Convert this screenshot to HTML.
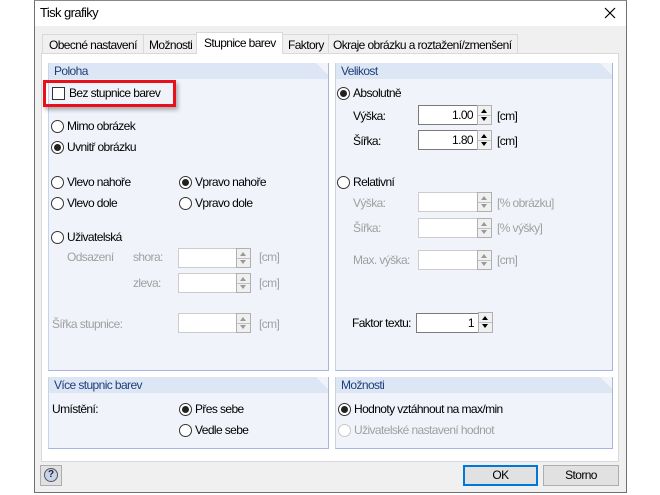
<!DOCTYPE html>
<html><head><meta charset="utf-8"><style>
*{box-sizing:border-box;margin:0;padding:0}
body{width:660px;height:495px;background:#fff;position:relative;overflow:hidden;font-family:"Liberation Sans",sans-serif;font-size:12px;letter-spacing:-0.6px;color:#000}
.a{position:absolute;white-space:nowrap}
.dis{color:#a0a0a0}
.grp{position:absolute;background:#f0f4fa;border-right:1px solid #a9b4e0;border-bottom:1px solid #a9b4e0;border-left:1px solid #c8d2ea}
.grp .h{position:absolute;left:0;top:0;right:0;height:16px;background:#dde6f4;color:#1e3f7a;padding:2px 5px;font-size:12px;line-height:12px;clip-path:polygon(0 0,calc(100% - 12px) 0,100% 12px,100% 100%,0 100%)}
.rad{position:absolute;width:13px;height:13px;border:1px solid #333;border-radius:50%;background:#fff}
.rad.on::after{content:"";position:absolute;left:2px;top:2px;width:7px;height:7px;border-radius:50%;background:#222}
.rad.d{border-color:#c8c8c8}
.inp{position:absolute;height:20px;background:#fff;border:1px solid #7a7a7a;text-align:right;padding:2px 4px;font-size:12px;line-height:14px}
.inp.d{border-color:#ccc}
.sp{position:absolute;width:15px;height:20px;border:1px solid #b0b0b0;background:#f0f0f0}
.sp::before{content:"";position:absolute;left:3px;top:3px;border-left:3.5px solid transparent;border-right:3.5px solid transparent;border-bottom:4px solid #000}
.sp::after{content:"";position:absolute;left:3px;top:11px;border-left:3.5px solid transparent;border-right:3.5px solid transparent;border-top:4px solid #000}
.sp.d::before{border-bottom-color:#999}.sp.d::after{border-top-color:#999}
.sp i{position:absolute;left:0;right:0;top:9px;border-top:1px solid #c0c0c0}
.btn{position:absolute;height:21px;background:#e1e1e1;border:1px solid #adadad;text-align:center;line-height:19px}
.tab{overflow:hidden}
</style></head><body>
<div class="a" style="left:34px;top:0;width:593px;height:493px;background:#f0f0f0;border:1px solid #707070;border-top:1px solid #888"></div>
<div class="a" style="left:35px;top:1px;width:591px;height:25px;background:#fff"></div>
<div class="a" style="left:40px;top:5px;font-size:13px">Tisk grafiky</div>
<svg class="a" style="left:604px;top:7px" width="12" height="12"><path d="M1 1L11 11M11 1L1 11" stroke="#000" stroke-width="1.2"/></svg>
<div class="a" style="left:41px;top:53px;width:578px;height:409px;background:#fff;border:1px solid #d9d9d9"></div>
<div class="a tab" style="left:42px;top:34px;width:102px;height:20px;border:1px solid #d9d9d9;background:#f0f0f0;padding:3px 6px">Obecné nastavení</div>
<div class="a tab" style="left:143px;top:34px;width:54px;height:20px;border:1px solid #d9d9d9;background:#f0f0f0;padding:3px 5px">Možnosti</div>
<div class="a tab" style="left:196px;top:32px;width:87px;height:22px;border:1px solid #d9d9d9;border-bottom:none;background:#fff;padding:3px 7px">Stupnice barev</div>
<div class="a tab" style="left:282px;top:34px;width:47px;height:20px;border:1px solid #d9d9d9;background:#f0f0f0;padding:3px 5px">Faktory</div>
<div class="a tab" style="left:328px;top:34px;width:190px;height:20px;border:1px solid #d9d9d9;background:#f0f0f0;padding:3px 4px">Okraje obrázku a roztažení/zmenšení</div>
<div class="grp" style="left:48px;top:63px;width:281px;height:308px"><div class="h">Poloha</div></div>
<div class="a" style="left:43px;top:80px;width:133px;height:27px;border:3px solid #e8101a;box-shadow:2px 3px 4px rgba(0,0,0,.3)"></div>
<div class="a" style="left:52px;top:87px;width:13px;height:13px;border:1px solid #333;background:#fff"></div>
<div class="a" style="left:69px;top:86px">Bez stupnice barev</div>
<div class="rad" style="left:51px;top:120px"></div><div class="a" style="left:67px;top:119px">Mimo obrázek</div>
<div class="rad on" style="left:51px;top:141px"></div><div class="a" style="left:67px;top:140px">Uvnitř obrázku</div>
<div class="rad" style="left:51px;top:176px"></div><div class="a" style="left:67px;top:175px">Vlevo nahoře</div>
<div class="rad" style="left:51px;top:197px"></div><div class="a" style="left:67px;top:196px">Vlevo dole</div>
<div class="rad on" style="left:179px;top:176px"></div><div class="a" style="left:195px;top:175px">Vpravo nahoře</div>
<div class="rad" style="left:179px;top:197px"></div><div class="a" style="left:195px;top:196px">Vpravo dole</div>
<div class="rad" style="left:51px;top:231px"></div><div class="a" style="left:67px;top:230px">Uživatelská</div>
<div class="a dis" style="left:67px;top:250px">Odsazení</div><div class="a dis" style="left:133px;top:250px">shora:</div>
<div class="inp d" style="left:178px;top:248px;width:59px"></div><div class="sp d" style="left:236px;top:248px"><i></i></div><div class="a dis" style="left:259px;top:250px">[cm]</div>
<div class="a dis" style="left:133px;top:276px">zleva:</div>
<div class="inp d" style="left:178px;top:273px;width:59px"></div><div class="sp d" style="left:236px;top:273px"><i></i></div><div class="a dis" style="left:259px;top:276px">[cm]</div>
<div class="a dis" style="left:52px;top:317px">Šířka stupnice:</div>
<div class="inp d" style="left:178px;top:313px;width:59px"></div><div class="sp d" style="left:236px;top:313px"><i></i></div><div class="a dis" style="left:259px;top:317px">[cm]</div>
<div class="grp" style="left:335px;top:63px;width:278px;height:308px"><div class="h">Velikost</div></div>
<div class="rad on" style="left:337px;top:87px"></div><div class="a" style="left:353px;top:86px">Absolutně</div>
<div class="a" style="left:353px;top:109px">Výška:</div>
<div class="inp" style="left:418px;top:105px;width:60px">1.00</div><div class="sp" style="left:477px;top:105px"><i></i></div><div class="a" style="left:497px;top:109px">[cm]</div>
<div class="a" style="left:353px;top:134px">Šířka:</div>
<div class="inp" style="left:418px;top:130px;width:60px">1.80</div><div class="sp" style="left:477px;top:130px"><i></i></div><div class="a" style="left:497px;top:134px">[cm]</div>
<div class="rad" style="left:337px;top:176px"></div><div class="a" style="left:353px;top:175px">Relativní</div>
<div class="a dis" style="left:353px;top:196px">Výška:</div>
<div class="inp d" style="left:418px;top:192px;width:60px"></div><div class="sp d" style="left:477px;top:192px"><i></i></div><div class="a dis" style="left:497px;top:196px">[% obrázku]</div>
<div class="a dis" style="left:353px;top:221px">Šířka:</div>
<div class="inp d" style="left:418px;top:218px;width:60px"></div><div class="sp d" style="left:477px;top:218px"><i></i></div><div class="a dis" style="left:497px;top:221px">[% výšky]</div>
<div class="a dis" style="left:353px;top:253px">Max. výška:</div>
<div class="inp d" style="left:418px;top:250px;width:60px"></div><div class="sp d" style="left:477px;top:250px"><i></i></div><div class="a dis" style="left:497px;top:253px">[cm]</div>
<div class="a" style="left:352px;top:316px">Faktor textu:</div>
<div class="inp" style="left:416px;top:313px;width:63px">1</div><div class="sp" style="left:478px;top:312px;height:21px"><i></i></div>
<div class="grp" style="left:48px;top:377px;width:281px;height:72px"><div class="h">Více stupnic barev</div></div>
<div class="a" style="left:52px;top:402px">Umístění:</div>
<div class="rad on" style="left:179px;top:403px"></div><div class="a" style="left:195px;top:402px">Přes sebe</div>
<div class="rad" style="left:179px;top:424px"></div><div class="a" style="left:195px;top:423px">Vedle sebe</div>
<div class="grp" style="left:335px;top:377px;width:278px;height:72px"><div class="h">Možnosti</div></div>
<div class="rad on" style="left:338px;top:403px"></div><div class="a" style="left:354px;top:402px">Hodnoty vztáhnout na max/min</div>
<div class="rad d" style="left:338px;top:424px"></div><div class="a dis" style="left:354px;top:423px">Uživatelské nastavení hodnot</div>
<div class="btn" style="left:40px;top:465px;width:22px;height:21px"></div>
<div class="a" style="left:44px;top:468px;width:14px;height:14px;border-radius:50%;background:#c9d4e8;border:1px solid #556;font-size:10px;font-weight:bold;text-align:center;line-height:12px;color:#223;letter-spacing:0">?</div>
<div class="btn" style="left:463px;top:465px;width:75px;border:2px solid #0078d7;line-height:17px">OK</div>
<div class="btn" style="left:543px;top:465px;width:76px">Storno</div>
</body></html>
